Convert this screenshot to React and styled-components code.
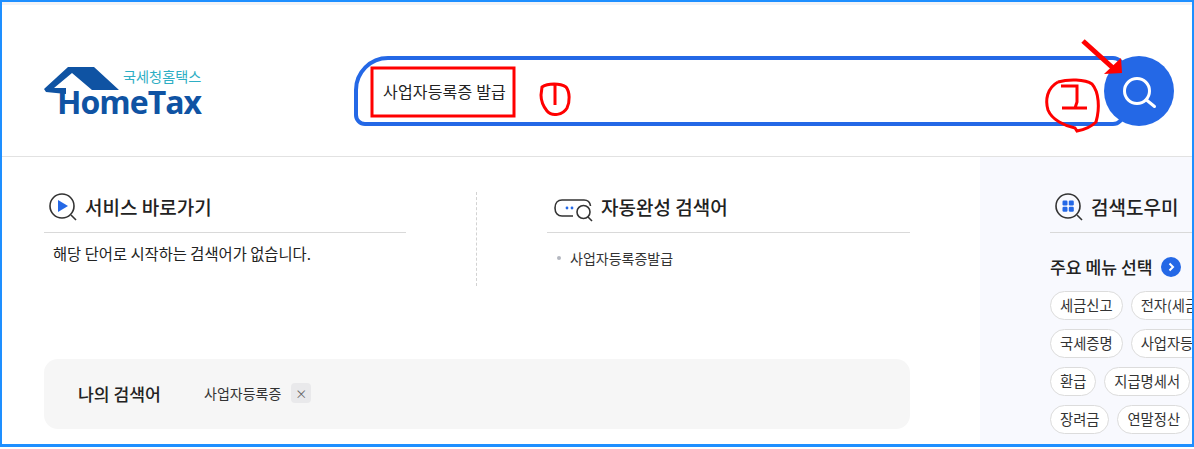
import React from "react";
import styled, { createGlobalStyle } from "styled-components";

const GlobalStyle = createGlobalStyle`
  html, body {
    margin: 0;
    padding: 0;
    background: #fff;
  }
  body {
    font-family: "Noto Sans CJK KR", "Noto Sans", sans-serif;
    color: #222;
  }
  * {
    box-sizing: border-box;
  }
`;

const helpChips = [
  ["세금신고", "전자(세금계산서)"],
  ["국세증명", "사업자등록"],
  ["환급", "지급명세서"],
  ["장려금", "연말정산"],
];

const Frame = styled.div`
  position: relative;
  width: 1194px;
  height: 447px;
  border: solid #1e8fff;
  border-width: 2px 2px 3px 2px;
  overflow: hidden;
  background: #fff;
`;

const TopStrip = styled.div`
  height: 3px;
  background: #f2f3f7;
`;

const Header = styled.header`
  display: flex;
  align-items: flex-start;
  height: 152px;
  border-bottom: 1px solid #e2e2e2;
  padding: 51px 0 0 41px;
`;

const Logo = styled.div`
  flex: none;
  width: 158px;
  height: 64px;
  margin-right: 153px;
  position: relative;
  padding: 11px 0 0 80px;
  white-space: nowrap;
`;

const LogoHouse = styled.svg`
  position: absolute;
  left: 0;
  top: 6px;
  width: 78px;
  height: 52px;
`;

const LogoSub = styled.span`
  display: block;
  font-size: 14.2px;
  line-height: 18px;
  color: #2eaec4;
`;

const LogoName = styled.span`
  position: absolute;
  left: 14px;
  top: 33px;
  font-family: "Open Sans", "Noto Sans", sans-serif;
  font-size: 32px;
  line-height: 26px;
  font-weight: 700;
  letter-spacing: -1px;
  color: #0f53a3;
`;

const SearchRow = styled.div`
  display: flex;
  align-items: center;
`;

const SearchBox = styled.div`
  width: 771px;
  height: 70px;
  border: 4px solid #2468e6;
  border-radius: 34px 12px 12px 11px;
  display: flex;
  align-items: center;
  padding: 0 0 0 25px;
  font-size: 16px;
  letter-spacing: 0.18px;
  color: #222;
`;

const SearchButton = styled.button`
  width: 70px;
  height: 70px;
  margin-left: -21px;
  padding: 0;
  border: 0;
  border-radius: 50%;
  background: #2468e6;
  display: flex;
  align-items: center;
  justify-content: center;
  position: relative;
`;

const Body = styled.main`
  display: flex;
  height: 287px;
`;

const LeftArea = styled.div`
  width: 978px;
  padding: 35px 70px 0 42px;
`;

const Columns = styled.div`
  display: flex;
  height: 94px;
`;

const Column = styled.section`
  width: ${(p) => p.$width}px;
`;

const Divider = styled.div`
  width: 0;
  height: 94px;
  margin: 0 70px;
  border-left: 1px dashed #d2d2d2;
`;

const SectionHead = styled.div`
  display: flex;
  align-items: center;
  gap: ${(p) => p.$gap || 7}px;
  height: 41px;
  padding: 0 0 11px ${(p) => p.$pad || 4}px;
  border-bottom: 1px solid #d9d9d9;
`;

const SectionTitle = styled.h2`
  margin: 0;
  font-size: 19px;
  line-height: 30px;
  font-weight: 500;
  color: #222;
`;

const EmptyText = styled.p`
  margin: 9px 0 0 9px;
  font-size: 15.35px;
  line-height: 22px;
  color: #222;
`;

const SuggestRow = styled.div`
  display: flex;
  align-items: center;
  gap: 9px;
  margin: 14px 0 0 10px;
  font-size: 14px;
  line-height: 22px;
  color: #333;
`;

const Dot = styled.i`
  width: 4px;
  height: 4px;
  border-radius: 50%;
  background: #b4b7c0;
`;

const MySearch = styled.div`
  display: flex;
  align-items: center;
  height: 70px;
  margin-top: 73px;
  padding: 0 0 2px 34px;
  border-radius: 14px;
  background: #f6f6f6;
`;

const MyTitle = styled.strong`
  width: 126px;
  font-size: 17.2px;
  font-weight: 500;
  color: #222;
`;

const MyWord = styled.span`
  font-size: 14px;
  color: #333;
`;

const RemoveWord = styled.span`
  width: 20px;
  height: 20px;
  margin-left: 10px;
  border-radius: 4px;
  background: #e9e9eb;
  display: flex;
  align-items: center;
  justify-content: center;
  color: #666;
  font-size: 12px;
`;

const HelpPanel = styled.aside`
  flex: 1;
  min-width: 0;
  background: #f8f9fe;
  padding: 35px 0 0 70px;
  overflow: hidden;
`;

const MenuTitle = styled.div`
  display: flex;
  align-items: center;
  gap: 8px;
  margin-top: 20px;
  font-size: 17.2px;
  line-height: 28px;
  font-weight: 500;
  color: #222;
`;

const MenuArrow = styled.span`
  width: 20px;
  height: 20px;
  border-radius: 50%;
  background: #2468e6;
  display: flex;
  align-items: center;
  justify-content: center;
`;

const ChipGroup = styled.div`
  display: flex;
  flex-direction: column;
  gap: 9px;
  margin-top: 10px;
`;

const ChipRow = styled.div`
  display: flex;
  gap: 8px;
  white-space: nowrap;
`;

const Chip = styled.span`
  flex: none;
  height: 29px;
  padding: 0 9px;
  border: 1px solid #dcdcdc;
  border-radius: 15px;
  background: #fff;
  font-size: 14.3px;
  line-height: 26px;
  color: #333;
`;

const Annotations = styled.svg`
  position: absolute;
  left: -2px;
  top: -2px;
  width: 1194px;
  height: 449px;
  pointer-events: none;
`;

function LensIcon({ children, width = 30, viewBox = "0 0 30 30" }) {
  return (
    <svg width={width} height="30" viewBox={viewBox} fill="none">
      {children}
    </svg>
  );
}

export default function App() {
  return (
    <Frame>
      <GlobalStyle />
      <TopStrip />
      <Header>
        <Logo>
          <LogoHouse viewBox="0 0 78 52">
            <path
              d="M1 27 L25 5 H51 L76 28 H49 L29 11 L11 26 H23 V32 L3 30 Z"
              fill="#0f53a3"
            />
          </LogoHouse>
          <LogoSub>국세청홈택스</LogoSub>
          <LogoName>HomeTax</LogoName>
        </Logo>
        <SearchRow>
          <SearchBox>사업자등록증 발급</SearchBox>
          <SearchButton aria-label="검색">
            <svg width="36" height="36" viewBox="0 0 36 36" fill="none">
              <circle cx="16" cy="18" r="12.5" stroke="#fff" strokeWidth="3" />
              <path d="M25.5 27 L33.5 33.5" stroke="#fff" strokeWidth="3" strokeLinecap="round" />
            </svg>
          </SearchButton>
        </SearchRow>
      </Header>
      <Body>
        <LeftArea>
          <Columns>
            <Column $width={362}>
              <SectionHead>
                <LensIcon>
                  <circle cx="14" cy="14" r="12" stroke="#333" strokeWidth="1.6" />
                  <path d="M23 23 L28 28" stroke="#333" strokeWidth="1.6" />
                  <path d="M10 8 L20 14 L10 20 Z" fill="#2468e6" />
                </LensIcon>
                <SectionTitle>서비스 바로가기</SectionTitle>
              </SectionHead>
              <EmptyText>해당 단어로 시작하는 검색어가 없습니다.</EmptyText>
            </Column>
            <Divider />
            <Column $width={363}>
              <SectionHead $pad={7} $gap={8}>
                <LensIcon width={39} viewBox="0 0 39 30">
                  <path
                    d="M19 24 H8 C4 24 1 21 1 16 C1 11 4 8 8 8 H30 C33.5 8 36 10 36.5 14"
                    stroke="#333"
                    strokeWidth="1.6"
                  />
                  <circle cx="13" cy="16" r="1.4" fill="#2468e6" />
                  <circle cx="18" cy="16" r="1.4" fill="#2468e6" />
                  <circle cx="29.5" cy="20" r="6.5" stroke="#333" strokeWidth="1.6" />
                  <path d="M34 25 L38 29" stroke="#333" strokeWidth="1.6" />
                </LensIcon>
                <SectionTitle>자동완성 검색어</SectionTitle>
              </SectionHead>
              <SuggestRow>
                <Dot />
                사업자등록증발급
              </SuggestRow>
            </Column>
          </Columns>
          <MySearch>
            <MyTitle>나의 검색어</MyTitle>
            <MyWord>사업자등록증</MyWord>
            <RemoveWord>×</RemoveWord>
          </MySearch>
        </LeftArea>
        <HelpPanel>
          <SectionHead>
            <LensIcon>
              <circle cx="14" cy="14" r="12" stroke="#333" strokeWidth="1.6" />
              <path d="M23 23 L28 28" stroke="#333" strokeWidth="1.6" />
              <rect x="8.5" y="8.5" width="5" height="5" rx="1.2" fill="#2468e6" />
              <rect x="14.8" y="8.5" width="5" height="5" rx="1.2" fill="#2468e6" />
              <rect x="8.5" y="14.8" width="5" height="5" rx="1.2" fill="#2468e6" />
              <rect x="14.8" y="14.8" width="5" height="5" rx="1.2" fill="#2468e6" />
            </LensIcon>
            <SectionTitle>검색도우미</SectionTitle>
          </SectionHead>
          <MenuTitle>
            주요 메뉴 선택
            <MenuArrow>
              <svg width="10" height="10" viewBox="0 0 10 10" fill="none">
                <path d="M3.5 1.5 L7 5 L3.5 8.5" stroke="#fff" strokeWidth="2" />
              </svg>
            </MenuArrow>
          </MenuTitle>
          <ChipGroup>
            {helpChips.map((row) => (
              <ChipRow key={row[0]}>
                {row.map((label) => (
                  <Chip key={label}>{label}</Chip>
                ))}
              </ChipRow>
            ))}
          </ChipGroup>
        </HelpPanel>
      </Body>
      <Annotations viewBox="0 0 1194 449" fill="none">
        <rect x="372" y="68" width="142" height="48" stroke="#f00" strokeWidth="3" />
        <path
          d="M542 87 C548 83 560 83 566 87 C570 92 570 102 567 108 C563 115 552 117 547 111 C543 106 541 100 541 95 Z M555 85 V105"
          stroke="#f00"
          strokeWidth="3"
        />
        <path
          d="M1058 82 C1068 79 1085 79 1092 84 C1099 92 1100 108 1096 122 C1090 128 1083 130 1077 131 L1075 128 C1065 126 1052 120 1048 110 C1045 100 1047 88 1058 82 M1061 86 H1077 V102 L1075 108 M1062 108 H1087"
          stroke="#f00"
          strokeWidth="3"
        />
        <path d="M1083 41 L1113 68" stroke="#f00" strokeWidth="5" />
        <path d="M1121 58 L1122 73 L1104 74 Z" fill="#f00" />
      </Annotations>
    </Frame>
  );
}
